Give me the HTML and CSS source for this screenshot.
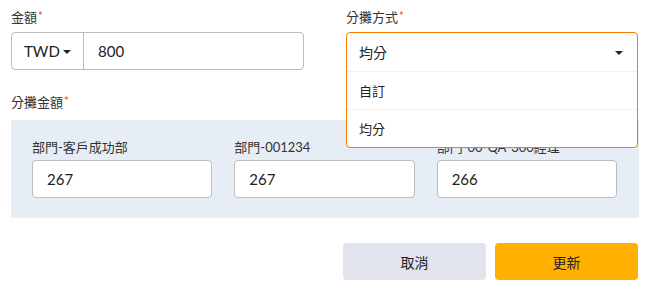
FILE: index.html
```html
<!DOCTYPE html>
<html>
<head>
<meta charset="UTF-8">
<title>分攤設定</title>
<link rel="stylesheet" href="styles.css">
</head>
<body>
  <div class="form">
    <div class="row">
      <div class="field">
        <label class="label">金額<span class="req">*</span></label>
        <div class="input-group">
          <div class="currency">TWD<span class="caret"></span></div>
          <div class="amount">800</div>
        </div>
      </div>
      <div class="field">
        <label class="label">分攤方式<span class="req">*</span></label>
        <div class="select">
          <div class="select-menu">
            <div class="option current">均分<span class="caret"></span></div>
            <div class="option">自訂</div>
            <div class="option">均分</div>
          </div>
        </div>
      </div>
    </div>

    <label class="label split-label">分攤金額<span class="req">*</span></label>
    <div class="split-panel">
      <div class="split-item">
        <div class="sub-label">部門-客戶成功部</div>
        <div class="text-input">267</div>
      </div>
      <div class="split-item">
        <div class="sub-label">部門-001234</div>
        <div class="text-input">267</div>
      </div>
      <div class="split-item">
        <div class="sub-label">部門-00-QA-300經理</div>
        <div class="text-input">266</div>
      </div>
    </div>

    <div class="actions">
      <button class="btn btn-cancel">取消</button>
      <button class="btn btn-primary">更新</button>
    </div>
  </div>
</body>
</html>
```

FILE: styles.css
```css
body {
  margin: 0;
  font-family: Lato, "Noto Sans CJK TC", sans-serif;
  color: #222;
  background: #fff;
}

.form {
  width: 628px;
  padding: 7px 0 0 11px;
}

.row {
  display: flex;
  gap: 42px;
}

.field {
  width: 293px;
  position: relative;
}

.label {
  display: block;
  font-size: 13px;
  line-height: 20px;
  color: #333;
  margin-bottom: 5px;
}

.req {
  color: #f26b3a;
  font-size: 11px;
  font-weight: bold;
  vertical-align: top;
  margin-left: 1px;
  position: relative;
  top: -1px;
}

.input-group {
  display: flex;
  height: 38px;
  box-sizing: border-box;
  border: 1px solid #bcbcbc;
  border-radius: 4px;
  font-size: 15px;
}

.currency {
  width: 72px;
  border-right: 1px solid #bcbcbc;
  display: flex;
  align-items: center;
  padding-left: 12px;
  box-sizing: border-box;
}

.caret {
  display: inline-block;
  width: 0;
  height: 0;
  border-left: 4px solid transparent;
  border-right: 4px solid transparent;
  border-top: 4px solid #222;
  margin-left: 3px;
  margin-top: 2px;
}

.amount {
  display: flex;
  align-items: center;
  padding-left: 14px;
}

.select {
  height: 38px;
  position: relative;
}

.select-menu {
  position: absolute;
  top: 0;
  left: 0;
  width: 292px;
  box-sizing: border-box;
  border: 1px solid #f57c00;
  border-radius: 4px;
  background: #fff;
  z-index: 10;
}

.option {
  height: 37px;
  display: flex;
  align-items: center;
  padding: 0 12px;
  font-size: 13px;
  color: #222;
  border-top: 1px solid #f0f0f0;
}

.option:first-child {
  border-top: none;
  height: 38px;
  font-size: 14px;
}

.option.current {
  justify-content: space-between;
}

.option.current .caret {
  margin-right: 2px;
}

.split-label {
  margin-top: 22px;
  margin-bottom: 8px;
}

.split-panel {
  display: flex;
  gap: 22px;
  background: #e6edf5;
  padding: 17px 22px 20px 21px;
}

.split-item {
  flex: 1;
}

.sub-label {
  font-size: 13px;
  line-height: 20px;
  color: #333;
  margin-bottom: 3px;
}

.text-input {
  height: 38px;
  box-sizing: border-box;
  border: 1px solid #bcbcbc;
  border-radius: 4px;
  background: #fff;
  display: flex;
  align-items: center;
  padding-left: 14px;
  font-size: 15px;
}

.actions {
  display: flex;
  justify-content: flex-end;
  gap: 9px;
  margin-top: 25px;
  padding-right: 1px;
}

.btn {
  width: 143px;
  height: 37px;
  border: none;
  border-radius: 4px;
  font-family: Lato, "Noto Sans CJK TC", sans-serif;
  font-size: 14px;
  color: #222;
  cursor: pointer;
}

.btn-cancel {
  background: #e1e4ec;
}

.btn-primary {
  background: #ffb000;
}
```
